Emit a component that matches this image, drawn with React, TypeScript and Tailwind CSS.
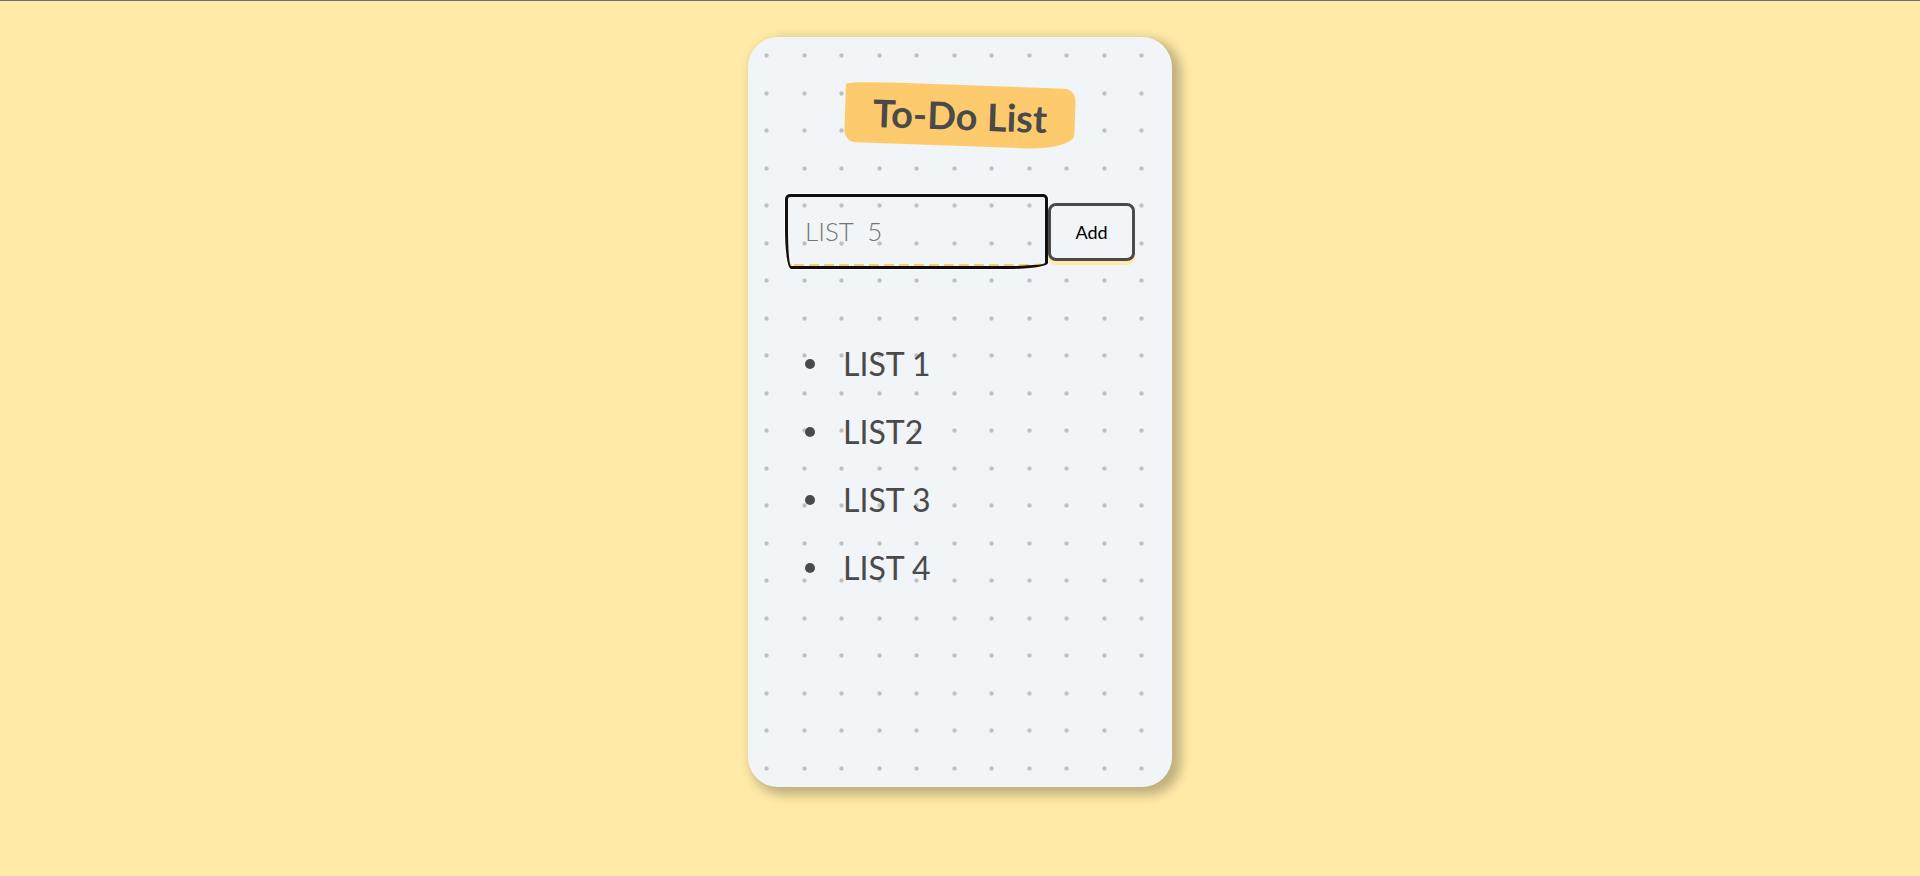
import { useState } from "react";
import type { FormEvent } from "react";

export default function App() {
  const [items, setItems] = useState<string[]>(["LIST 1", "LIST2", "LIST 3", "LIST 4"]);
  const [draft, setDraft] = useState("LIST  5");

  function addItem(event: FormEvent) {
    event.preventDefault();
    if (!draft.trim()) return;
    setItems([...items, draft]);
    setDraft("");
  }

  return (
    <div className="flex min-h-screen flex-col items-center border-t border-[#6f6f6f] bg-[#ffeaa7] px-6 py-9 font-['Lato',sans-serif] text-[#4a4a4a]">
      <main className="min-h-[750px] w-full max-w-[424px] rounded-[30px] bg-[#f1f5f8] bg-[radial-gradient(circle,#bfc0c1_3%,transparent_5%),radial-gradient(circle,#bfc0c1_3%,transparent_5%),radial-gradient(circle,#bfc0c1_3%,transparent_5%),radial-gradient(circle,#bfc0c1_3%,transparent_5%)] bg-[size:75px_75px] bg-[position:-19px_-19px,19px_-19px,-19px_19px,19px_19px] px-9 pt-12 pb-9 shadow-[6px_5px_11px_3px_#00000040]">
        <header className="flex justify-center">
          <h1 className="rotate-2 rounded-[20%_5%_20%_5%/5%_20%_25%_20%] bg-[#fdcb6e] px-7 py-2 text-[38px] leading-[45px] font-bold">
            To-Do List
          </h1>
        </header>
        <form onSubmit={addItem} className="mx-px mt-12 flex items-center">
          <input
            type="text"
            aria-label="New item"
            value={draft}
            onChange={(event) => setDraft(event.target.value)}
            className="h-[75px] min-w-0 flex-1 rounded-[5px_5px_40px_6px/5px_5px_6px_40px] border-b-5 border-dashed border-[#fdcb6e] bg-transparent px-5 pt-1 text-[26px] font-light text-[#757575] shadow-[0_0_0_1px_#ffffff] outline-3 -outline-offset-3 outline-[#101010]"
          />
          <button
            type="submit"
            className="h-[58px] w-[87px] rounded-lg border-3 border-[#4a4a4a] bg-[#f1f5f8] text-lg text-black shadow-[0_4px_0_#ffeaa7]"
          >
            Add
          </button>
        </form>
        <ul className="mt-[61px] pl-[21px]">
          {items.map((item, index) => (
            <li key={index} className="flex h-[68px] items-center gap-7 text-[32px] whitespace-pre">
              <span className="size-[10px] rounded-full bg-[#4a4a4a]" />
              {item}
            </li>
          ))}
        </ul>
      </main>
    </div>
  );
}
